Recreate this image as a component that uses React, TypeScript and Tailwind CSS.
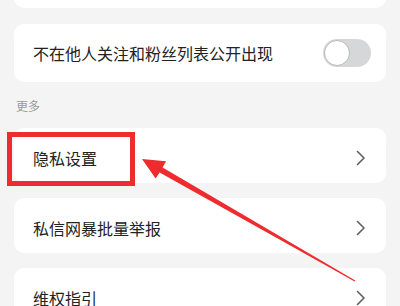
const font = { fontFamily: '"Noto Sans CJK SC", "Noto Sans", sans-serif' }

function Chevron() {
  return (
    <svg width="10" height="16" viewBox="0 0 10 16" fill="none" className="shrink-0">
      <path d="M1.5 1.5L8 8l-6.5 6.5" stroke="#5f5f5f" strokeWidth="1.6" strokeLinecap="round" strokeLinejoin="round" />
    </svg>
  )
}

function LinkRow({ label, className = '' }: { label: string; className?: string }) {
  return (
    <div className={`flex items-center justify-between rounded-[10px] bg-white pl-[19px] pr-[20px] ${className}`}>
      <span className="text-[16px] leading-none text-[#222]">{label}</span>
      <Chevron />
    </div>
  )
}

export default function App() {
  return (
    <div className="relative h-[306px] w-[400px] overflow-hidden bg-[#f4f4f4]" style={font}>
      <div className="flex flex-col px-[14px]">
        <div className="-mt-[32px] h-[40px] rounded-[10px] bg-white" />
        <div className="mt-[16px] flex h-[58px] items-center justify-between rounded-[10px] bg-white pl-[19px] pr-[15px]">
          <span className="text-[16px] leading-none text-[#222]">不在他人关注和粉丝列表公开出现</span>
          <div className="flex h-[28px] w-[48px] items-center rounded-full bg-[#d5d7d9] pl-[1px]">
            <div className="h-[26px] w-[26px] rounded-full border border-[#b9b9b9] bg-white" />
          </div>
        </div>
        <div className="flex h-[46px] items-center pl-[2px] pt-[2px] text-[12px] text-[#9a9a9a]">更多</div>
        <LinkRow label="隐私设置" className="h-[55px] pt-[4px]" />
        <LinkRow label="私信网暴批量举报" className="mt-[15px] h-[55px] pt-[5px]" />
        <LinkRow label="维权指引" className="mt-[15px] h-[55px] pt-[4px]" />
      </div>

      <div className="pointer-events-none absolute left-[7px] top-[132px] h-[54px] w-[128px] border-[5px] border-[#ee2b2f]" />

      {/* annotation arrow */}
      <svg className="pointer-events-none absolute left-0 top-0" width="400" height="306" viewBox="0 0 400 306">
        <polygon
          points="142,159 166.1,161.3 162.6,167.4 355.3,280.6 354.7,281.4 159.6,172.6 155.6,178.6"
          fill="#ee2b2f"
        />
      </svg>
    </div>
  )
}
